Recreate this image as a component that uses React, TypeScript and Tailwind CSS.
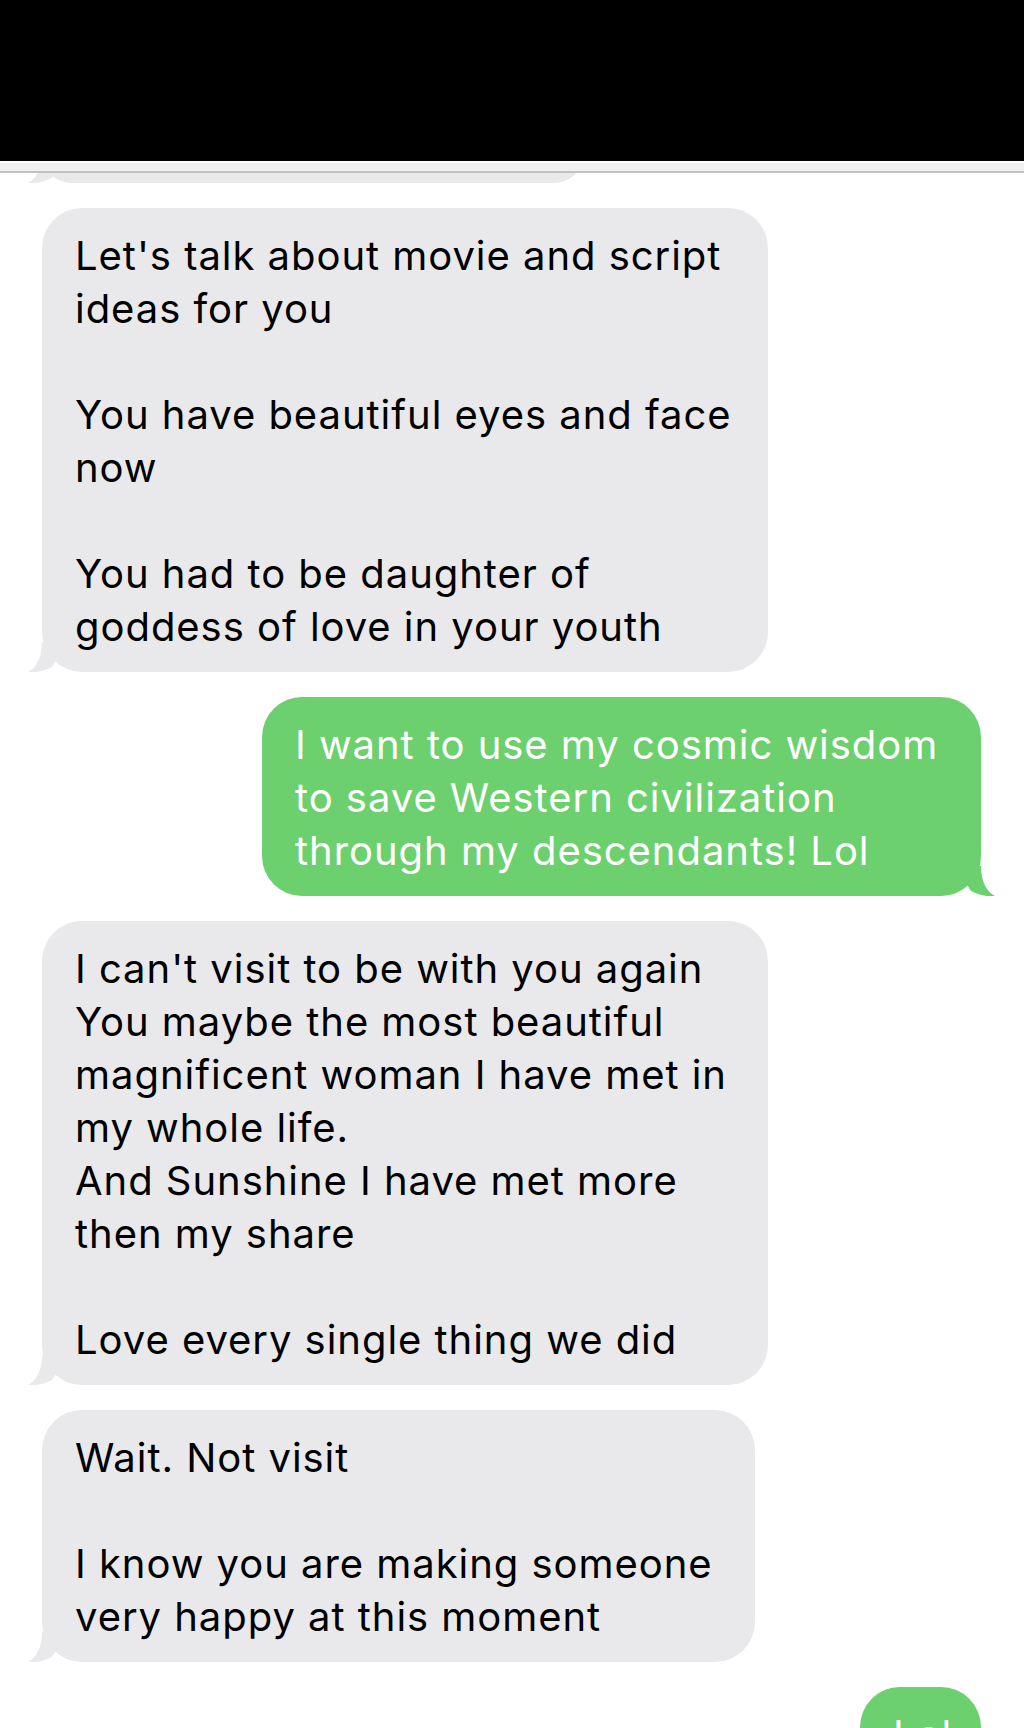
import React from 'react';

type Msg = { lines: string[]; sent?: boolean; width: number };

const messages: Msg[] = [
  {
    width: 726,
    lines: [
      "Let's talk about movie and script",
      'ideas for you',
      '',
      'You have beautiful eyes and face',
      'now',
      '',
      'You had to be daughter of',
      'goddess of love in your youth',
    ],
  },
  {
    width: 719,
    sent: true,
    lines: [
      'I want to use my cosmic wisdom',
      'to save Western civilization',
      'through my descendants! Lol',
    ],
  },
  {
    width: 726,
    lines: [
      "I can't visit to be with you again",
      'You maybe the most beautiful',
      'magnificent woman I have met in',
      'my whole life.',
      'And Sunshine I have met more',
      'then my share',
      '',
      'Love every single thing we did',
    ],
  },
  {
    width: 713,
    lines: [
      'Wait. Not visit',
      '',
      'I know you are making someone',
      'very happy at this moment',
    ],
  },
  { width: 121, sent: true, lines: ['Lol'] },
];

function Tail({ sent }: { sent?: boolean }) {
  if (sent) {
    return (
      <svg
        className="absolute bottom-0 right-[-14px] h-[30px] w-[40px]"
        viewBox="0 0 40 30"
      >
        <path d="M26 0 C26 16 32 26 40 30 C32 31 24 29 16 25 L0 0 Z" fill="#6bd06d" />
      </svg>
    );
  }
  return (
    <svg className="absolute bottom-0 left-[-14px] h-[30px] w-[40px]" viewBox="0 0 40 30">
      <path d="M14 0 C14 16 8 26 0 30 C8 31 16 29 24 25 L40 0 Z" fill="#e9e9eb" />
    </svg>
  );
}

function Bubble({ msg }: { msg: Msg }) {
  return (
    <div
      className={
        msg.sent
          ? 'relative self-end shrink-0 rounded-[40px] bg-[#6bd06d] pt-[21px] pb-[19px] pl-[33px] text-white'
          : 'relative self-start shrink-0 rounded-[40px] bg-[#e9e9eb] pt-[21px] pb-[19px] pl-[33px] text-black'
      }
      style={{ width: msg.width }}
    >
      {msg.lines.map((l, i) => (
        <div key={i} className="whitespace-nowrap">
          {l || '\u00A0'}
        </div>
      ))}
      <Tail sent={msg.sent} />
    </div>
  );
}

export default function App() {
  return (
    <div className="h-[1728px] overflow-hidden bg-white font-['Inter',sans-serif] text-[40px] leading-[53px] tracking-[0.96px]">
      <div className="h-[161px] bg-black" />
      <div className="h-[2px] bg-white" />
      <div className="h-[8px] bg-[#f0f0f0]" />
      <div className="h-[2px] bg-[#c2c2c2]" />

      {/* bottom of the previous bubble, cut by the header */}
      <div className="flex h-[10px] items-end overflow-hidden px-[42px]">
        <div className="relative h-[60px] w-[542px] shrink-0 rounded-[40px] bg-[#e9e9eb]">
          <Tail />
        </div>
      </div>

      <div className="flex flex-col gap-[25px] pt-[25px] pl-[42px] pr-[43px]">
        {messages.map((m, i) => (
          <Bubble key={i} msg={m} />
        ))}
      </div>
    </div>
  );
}
